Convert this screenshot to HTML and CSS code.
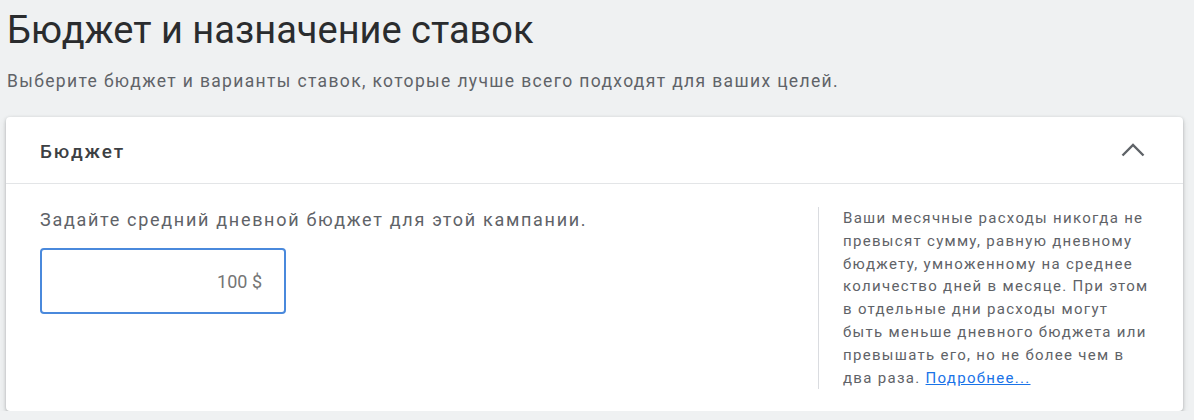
FILE: index.html
```html
<!DOCTYPE html>
<html lang="ru">
<head>
<meta charset="utf-8">
<link rel="stylesheet" href="styles.css">
</head>
<body>
<div class="page">
  <h1 class="title">Бюджет и назначение ставок</h1>
  <p class="subtitle">Выберите бюджет и варианты ставок, которые лучше всего подходят для ваших целей.</p>
  <section class="card">
    <header class="card-header">
      <span class="card-title">Бюджет</span>
      <svg class="chevron" width="24" height="14" viewBox="0 0 24 14"><path d="M1.5 12.5 L12 2 L22.5 12.5" fill="none" stroke="#5f6368" stroke-width="2.4"/></svg>
    </header>
    <div class="card-body">
      <div class="main-col">
        <p class="label">Задайте средний дневной бюджет для этой кампании.</p>
        <div class="input">100 $</div>
      </div>
      <div class="side-col">
        <p class="hint">Ваши месячные расходы никогда не превысят сумму, равную дневному бюджету, умноженному на среднее количество дней в месяце. При этом в отдельные дни расходы могут быть меньше дневного бюджета или превышать его, но не более чем в два раза. <a class="link" href="#">Подробнее...</a></p>
      </div>
    </div>
  </section>
</div>
</body>
</html>
```
FILE: styles.css
```css
html, body {
  margin: 0;
  padding: 0;
  background: #eff1f2;
  font-family: Roboto, "Noto Sans", sans-serif;
}
.page {
  padding: 5px 11px 0 6px;
}
.title {
  margin: 0 0 0 1px;
  font-size: 38px;
  font-weight: 400;
  color: #2a2c2e;
  line-height: 50px;
}
.subtitle {
  margin: 16px 0 0 1px;
  font-size: 17.5px;
  letter-spacing: 1.35px;
  color: #5f6368;
  line-height: 20px;
}
.card {
  margin-top: 26px;
  background: #fff;
  border-radius: 4px;
  box-shadow: 0 1px 3px rgba(60,64,67,0.3), 0 3px 6px rgba(60,64,67,0.15);
}
.card-header {
  height: 63px;
  display: flex;
  align-items: center;
  justify-content: space-between;
  padding: 3px 38px 0 34px;
  border-bottom: 1px solid #e3e5e7;
}
.card-title {
  font-size: 19px;
  font-weight: 500;
  letter-spacing: 1.9px;
  color: #3c4043;
}
.chevron {
  display: block;
  margin-top: -3px;
}
.card-body {
  display: flex;
  padding: 23px 0 22px;
}
.main-col {
  flex: 1;
  padding-left: 34px;
}
.label {
  margin: 2px 0 0;
  font-size: 18px;
  letter-spacing: 1.7px;
  line-height: 22px;
  color: #5f6368;
}
.input {
  margin-top: 17px;
  width: 246px;
  height: 66px;
  box-sizing: border-box;
  border: 2px solid #4a89dc;
  border-radius: 4px;
  display: flex;
  align-items: center;
  justify-content: flex-end;
  padding-right: 22px;
  font-size: 18px;
  color: #757575;
}
.side-col {
  width: 365px;
  border-left: 1px solid #dadce0;
  padding: 0 32px 0 24px;
  box-sizing: border-box;
}
.hint {
  margin: 0;
  font-size: 15px;
  letter-spacing: 1.3px;
  line-height: 22.8px;
  color: #5f6368;
}
.link {
  color: #1a73e8;
}
```
